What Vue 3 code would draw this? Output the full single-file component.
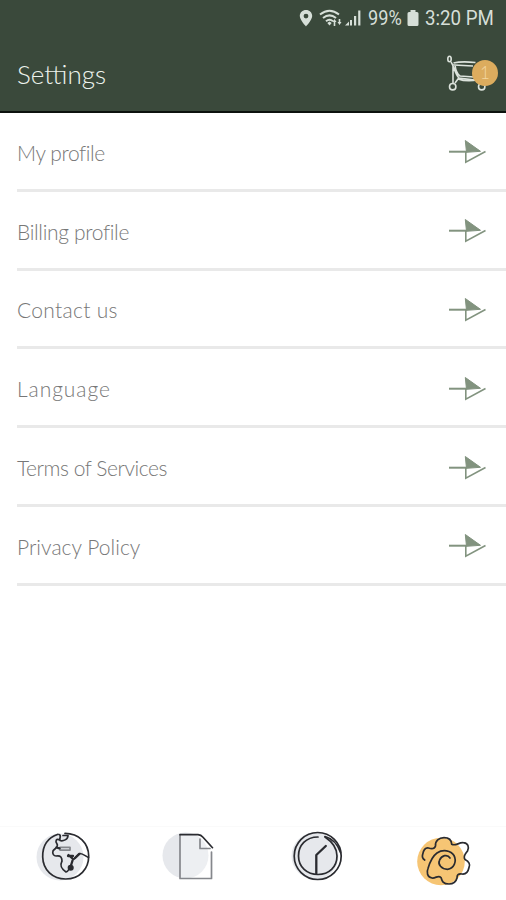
<script setup>
const items = [
  { label: 'My profile', spacing: -0.4 },
  { label: 'Billing profile', spacing: -0.33 },
  { label: 'Contact us', spacing: 0.3 },
  { label: 'Language', spacing: 0.95 },
  { label: 'Terms of Services', spacing: -0.46 },
  { label: 'Privacy Policy', spacing: 0.02 },
]
</script>

<template>
  <div class="screen">
    <header class="header">
      <div class="status">
        <svg width="14" height="18" viewBox="0 0 14 18"><path fill-rule="evenodd" d="M7 1C3.500 1 .8 3.600.8 7c0 4 6.200 10.400 6.200 10.400S13.200 11 13.200 7C13.200 3.600 10.500 1 7 1Zm0 3.700a2.400 2.400 0 1 1 0 4.800 2.400 2.400 0 0 1 0-4.800Z" /></svg>
        <svg class="wifi" width="24" height="18" viewBox="0 0 24 18">
          <path class="wave" d="M1 5.500Q10.500-2 20 5.500M4 9q6.500-5.200 13 0M7 12.300q3.500-3 7 0" />
          <path d="m8.300 14 2.200-1.500 2.200 1.500-2.200 2.500ZM13.500 13l2-3 2 3h-1.200v4h-1.600v-4Zm5 0h1.200v-3h1.600v3h1.200l-2 3Z" />
        </svg>
        <svg class="signal" width="18" height="18" viewBox="0 0 18 18"><path d="m1 16.500 4-4v4ZM6 11h2v5.500H6ZM10 7h2.200v9.500H10ZM14.200 1.500h2.200v15h-2.200Z" /></svg>
        <span class="percent">99%</span>
        <svg class="battery" width="12" height="18" viewBox="0 0 12 18"><path d="M3.500 1h5v2H10q1.500 0 1.500 1.500v11Q11.500 17 10 17H2Q.5 17 .5 15.500v-11Q.5 3 2 3h1.500Z" /></svg>
        <span class="time">3:20 PM</span>
      </div>
      <div class="titlebar">
        <h1 class="title">Settings</h1>
        <div class="cart">
          <svg width="44" height="38" viewBox="0 0 44 38">
            <g class="cart-lines">
              <ellipse cx="2.500" cy="4" rx="1.700" ry="2.700" />
              <path d="M4 7c3 4 4 12 8 16l16 2M6.500 8q8-2 22-.5M7 10l19 1M6 9v19M8 10q1 8 5 11l14 1M8 28l3-4q8 3 20 1l3 4" />
              <circle cx="5.700" cy="31.700" r="3.200" /><circle cx="34.700" cy="31.700" r="3.200" />
            </g>
          </svg>
          <span class="badge">1</span>
        </div>
      </div>
    </header>

    <main class="list">
      <div v-for="item in items" :key="item.label" class="row">
        <span class="label" :style="{ letterSpacing: item.spacing + 'px' }">{{ item.label }}</span>
        <svg class="arrow" width="38" height="26" viewBox="0 0 38 26">
          <path class="shaft" d="M0 12.700h18" />
          <path class="half" d="M16.300 1.500 31.500 12.300 17.500 13.300Z" />
          <path class="wing" d="M16.800 12v11.200L36.500 12.500" />
        </svg>
      </div>
    </main>

    <nav class="tabs">
      <svg class="tab" width="60" height="56" viewBox="0 0 60 56">
        <circle class="disc" cx="26" cy="27" r="23.500" />
        <g class="ink">
          <path d="M24 4.300C13 8 8.500 17 8.700 27c.3 13 10 22 23 22 14 0 23-10 23-23C54.500 13 45 3.400 31 3.400" />
          <path d="M25 4.500c3 1 0 3 1 6 3 1 8-1 8-5h-5M26 10c-4-2-5 1-3 4 2 3-3 5-4 7-1 3 1 5 3 5 5-1 6 2 6 5-3 6 1 9 4 11 3-1 3-4 5-5M46 23.500c3 0 6 3 8.500 4M40 29l6-5.500" />
          <path class="soft" d="M26 17.300h10v2.800H26Z" />
          <path class="bold" d="m22.500 17.500 3 .8M34.500 25l4.500 4-2.500 8M34 26h5M41 28l4-4" />
          <circle class="dot" cx="36.700" cy="37.700" r="2.200" />
        </g>
      </svg>
      <svg class="tab" width="60" height="56" viewBox="0 0 60 56">
        <circle class="disc" cx="24.500" cy="25.500" r="23" />
        <path class="paper" d="M19 4.500h19l13 13.500v30.500H19Z" />
        <g class="ink">
          <path class="gray" d="M19 5v43.500h31.500V22M39 9v9.500h10" />
          <path d="M19 4.700h18q3 .3 5 2.500l9.500 10.500" />
        </g>
      </svg>
      <svg class="tab" width="60" height="56" viewBox="0 0 60 56">
        <circle class="disc" cx="26" cy="26" r="23.500" />
        <g class="ink">
          <circle cx="28.700" cy="26" r="23.500" />
          <path d="M29 7C17 7 9.500 15 9.500 26S18 44.500 29 44.500 48 37 48 26q0-11-12-19" />
          <path d="M36 6.500q11 3 15.500 16" />
          <path class="bold" d="M27.300 43.500V25l9.500-9" />
        </g>
      </svg>
      <svg class="tab" width="60" height="56" viewBox="0 0 60 56">
        <circle class="disc gold" cx="25" cy="31.500" r="23.800" />
        <path class="ink" d="M8.700 30Q5.500 28 6.700 24.300C7.500 20 9 17.500 12.500 18c3 1 6 1 7-2C19 11 23 7.700 28 7.700s7.500 3 7.700 6.600c4 2 7-2 11.600-1.600C52 13 53.500 17 51.500 21c-2 3-5 5-2.500 8.500 4 2 5.500 5 4 8-1 5-3 7-7 6.500-4-.5-5 1-5 4-1 4-4 6-8 6-6 0-7-3-8-6.500-3-3-5 1-9 .5C11 47 10.500 42 12 38.500c2-7 4-12 9-15.500 6-4 14-2.500 17 2.500 3 6 0 13-6.500 13.800-6 0-10-5-8-9 2-5 8-6.500 10.500-2.300" />
      </svg>
    </nav>
  </div>
</template>

<style>
body { background: #fff; }
</style>

<style scoped>
.screen { width: 506px; height: 900px; display: flex; flex-direction: column; background: #fff; overflow: hidden; }
.header { height: 113px; flex: none; box-sizing: border-box; background: #3a493b; border-bottom: 2px solid #0c110d; }
.status { height: 36px; display: flex; align-items: center; padding-left: 299px; color: #d6dfd8; font: 20px/36px Roboto, sans-serif; white-space: nowrap; }
.status svg { fill: #d6dfd8; flex: none; }
.wifi { margin-left: 6px; }
.status .wave { fill: none; stroke: #d6dfd8; stroke-width: 2; }
.signal { margin-left: 1px; }
.percent, .time { display: block; transform-origin: 0 50%; }
.percent { width: 34px; margin-left: 6px; transform: scaleX(.91); }
.battery { margin-left: 5px; }
.time { margin-left: 6px; transform: scaleX(.935); }
.titlebar { height: 75px; display: flex; align-items: center; justify-content: space-between; padding: 0 8px 0 17px; }
.title { margin: 0; color: #edf3ed; font: 300 26px/32px Lato, sans-serif; letter-spacing: 0; }
.cart { position: relative; width: 51px; height: 38px; margin-top: 1px; }
.cart svg { display: block; }
.cart-lines { fill: none; stroke: #dce3dc; stroke-width: 1.600; }
.badge { position: absolute; left: 25px; top: 5px; width: 26px; height: 26px; border-radius: 50%; background: #dcac5e; color: #f3d6a0; font: 300 17px/26px Lato, sans-serif; text-align: center; }
.list { padding-left: 17px; }
.row { height: 78.800px; box-sizing: border-box; display: flex; align-items: center; justify-content: space-between; padding: 3px 19px 0 0; border-bottom: 3px solid #e9e9e9; }
.label { padding-top: 1px; color: #777; font: 300 21px/28px Lato, sans-serif; white-space: nowrap; }
.arrow { fill: none; stroke: #82937f; overflow: visible; }
.shaft { stroke-width: 2; }
.half { fill: #82937f; stroke-width: 1; }
.wing { stroke-width: 1.600; }
.tabs { margin-top: auto; height: 74px; display: flex; justify-content: space-between; box-sizing: border-box; padding: 3px 30px 0 34px; border-top: 1px solid #fafafa; }
.disc { fill: #e6e8ec; }
.gold { fill: #f6c574; }
.paper { fill: #fff; fill-opacity: .3; }
.ink { fill: none; stroke: #2a2b30; stroke-width: 1.700; stroke-linecap: round; stroke-linejoin: round; }
.bold { stroke-width: 2.300; }
.soft, .gray { stroke: #85878c; }
.dot { fill: #2a2b30; }
</style>
